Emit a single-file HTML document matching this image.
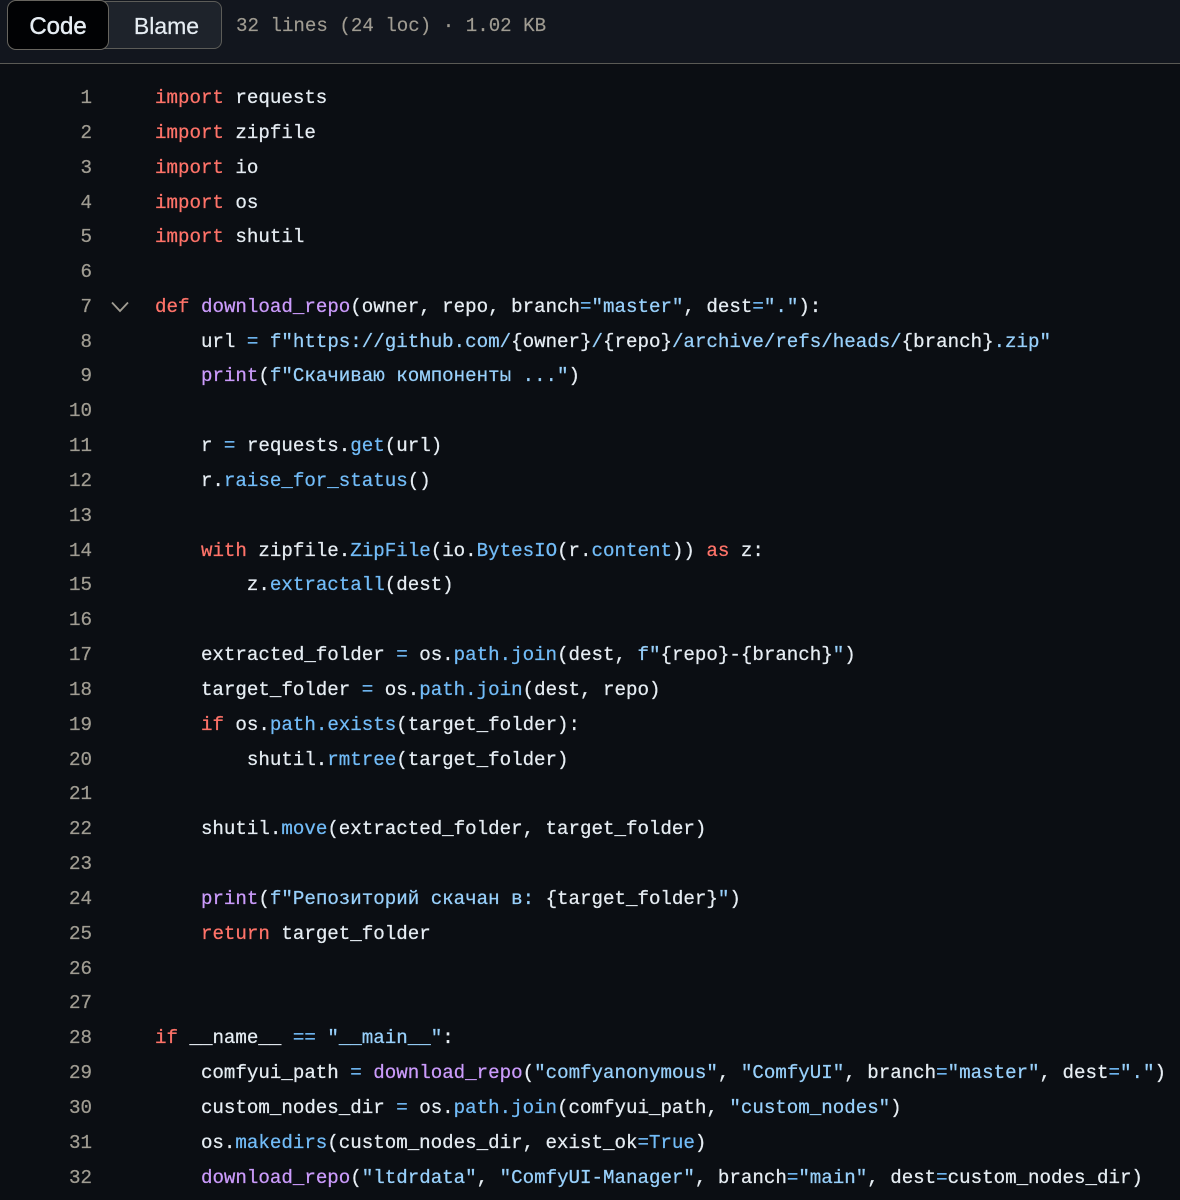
<!DOCTYPE html>
<html><head><meta charset="utf-8"><style>
html,body{margin:0;padding:0;background:#0b0e13;width:1180px;height:1200px;overflow:hidden}
#h{position:absolute;left:0;top:0;width:1180px;height:63px;background:#12161e;border-bottom:1px solid #5a5a55}
.b{position:absolute;font-family:"Liberation Sans",sans-serif;color:#e6edf3;text-align:center;box-sizing:border-box;-webkit-text-stroke:.2px currentColor}
#blame{left:90px;top:1px;width:132px;height:48px;background:#1e232b;border:1px solid #5c5c58;border-radius:8px;font-size:23px;line-height:49px;padding-left:21px}
#code{left:7px;top:0;width:102px;height:50px;background:#010204;border:1px solid #67655f;border-radius:9px;font-size:24px;line-height:51px;-webkit-text-stroke:.45px #e6edf3}
#meta{position:absolute;left:236px;top:13px;font:19.15px/26px "Liberation Mono",monospace;color:#a09c92;white-space:pre;-webkit-text-stroke:.15px currentColor}
.l,.n{position:absolute;font:19.15px/30px "Liberation Mono","DejaVu Sans Mono",monospace;white-space:pre;height:30px;-webkit-text-stroke:.25px currentColor}
.l{left:155px;color:#e6edf3}
.n{left:40px;width:52px;text-align:right;color:#a09c92}
.k{color:#ff7369}.f{color:#cb9bfb}.c{color:#72bcf8}.s{color:#98d0fb}
</style></head><body>
<div id="h"></div>
<div class="b" id="blame">Blame</div>
<div class="b" id="code">Code</div>
<div id="meta">32 lines (24 loc) · 1.02 KB</div>
<svg style="position:absolute;left:110px;top:300px" width="20" height="14" viewBox="0 0 20 14"><path d="M2 2.5 L10 11 L18 2.5" fill="none" stroke="#a09c92" stroke-width="1.8"/></svg>

<div class="n" style="top:83px">1</div><div class="l" style="top:83px"><span class="k">import</span> requests</div>
<div class="n" style="top:118px">2</div><div class="l" style="top:118px"><span class="k">import</span> zipfile</div>
<div class="n" style="top:153px">3</div><div class="l" style="top:153px"><span class="k">import</span> io</div>
<div class="n" style="top:188px">4</div><div class="l" style="top:188px"><span class="k">import</span> os</div>
<div class="n" style="top:222px">5</div><div class="l" style="top:222px"><span class="k">import</span> shutil</div>
<div class="n" style="top:257px">6</div>
<div class="n" style="top:292px">7</div><div class="l" style="top:292px"><span class="k">def</span> <span class="f">download_repo</span>(owner, repo, branch<span class="c">=</span><span class="s">"master"</span>, dest<span class="c">=</span><span class="s">"."</span>):</div>
<div class="n" style="top:327px">8</div><div class="l" style="top:327px">    url <span class="c">=</span> <span class="s">f"https://github.com/</span>{owner}<span class="s">/</span>{repo}<span class="s">/archive/refs/heads/</span>{branch}<span class="s">.zip"</span></div>
<div class="n" style="top:361px">9</div><div class="l" style="top:361px">    <span class="f">print</span>(<span class="s">f"Скачиваю компоненты ..."</span>)</div>
<div class="n" style="top:396px">10</div>
<div class="n" style="top:431px">11</div><div class="l" style="top:431px">    r <span class="c">=</span> requests.<span class="c">get</span>(url)</div>
<div class="n" style="top:466px">12</div><div class="l" style="top:466px">    r.<span class="c">raise_for_status</span>()</div>
<div class="n" style="top:501px">13</div>
<div class="n" style="top:536px">14</div><div class="l" style="top:536px">    <span class="k">with</span> zipfile.<span class="c">ZipFile</span>(io.<span class="c">BytesIO</span>(r.<span class="c">content</span>)) <span class="k">as</span> z:</div>
<div class="n" style="top:570px">15</div><div class="l" style="top:570px">        z.<span class="c">extractall</span>(dest)</div>
<div class="n" style="top:605px">16</div>
<div class="n" style="top:640px">17</div><div class="l" style="top:640px">    extracted_folder <span class="c">=</span> os.<span class="c">path.join</span>(dest, <span class="s">f"</span>{repo}-{branch}<span class="s">"</span>)</div>
<div class="n" style="top:675px">18</div><div class="l" style="top:675px">    target_folder <span class="c">=</span> os.<span class="c">path.join</span>(dest, repo)</div>
<div class="n" style="top:710px">19</div><div class="l" style="top:710px">    <span class="k">if</span> os.<span class="c">path.exists</span>(target_folder):</div>
<div class="n" style="top:745px">20</div><div class="l" style="top:745px">        shutil.<span class="c">rmtree</span>(target_folder)</div>
<div class="n" style="top:779px">21</div>
<div class="n" style="top:814px">22</div><div class="l" style="top:814px">    shutil.<span class="c">move</span>(extracted_folder, target_folder)</div>
<div class="n" style="top:849px">23</div>
<div class="n" style="top:884px">24</div><div class="l" style="top:884px">    <span class="f">print</span>(<span class="s">f"Репозиторий скачан в: </span>{target_folder}<span class="s">"</span>)</div>
<div class="n" style="top:919px">25</div><div class="l" style="top:919px">    <span class="k">return</span> target_folder</div>
<div class="n" style="top:954px">26</div>
<div class="n" style="top:988px">27</div>
<div class="n" style="top:1023px">28</div><div class="l" style="top:1023px"><span class="k">if</span> __name__ <span class="c">==</span> <span class="s">"__main__"</span>:</div>
<div class="n" style="top:1058px">29</div><div class="l" style="top:1058px">    comfyui_path <span class="c">=</span> <span class="f">download_repo</span>(<span class="s">"comfyanonymous"</span>, <span class="s">"ComfyUI"</span>, branch<span class="c">=</span><span class="s">"master"</span>, dest<span class="c">=</span><span class="s">"."</span>)</div>
<div class="n" style="top:1093px">30</div><div class="l" style="top:1093px">    custom_nodes_dir <span class="c">=</span> os.<span class="c">path.join</span>(comfyui_path, <span class="s">"custom_nodes"</span>)</div>
<div class="n" style="top:1128px">31</div><div class="l" style="top:1128px">    os.<span class="c">makedirs</span>(custom_nodes_dir, exist_ok<span class="c">=True</span>)</div>
<div class="n" style="top:1163px">32</div><div class="l" style="top:1163px">    <span class="f">download_repo</span>(<span class="s">"ltdrdata"</span>, <span class="s">"ComfyUI-Manager"</span>, branch<span class="c">=</span><span class="s">"main"</span>, dest<span class="c">=</span>custom_nodes_dir)</div>
</body></html>
